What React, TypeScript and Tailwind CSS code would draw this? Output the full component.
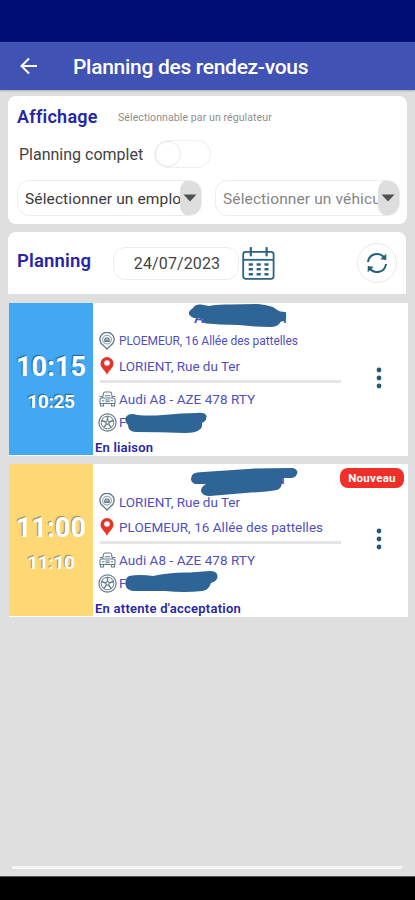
import React from "react";

const INK = "#2f6496";

function PinOutline() {
  return (
    <svg width="16" height="18" viewBox="0 0 16 18" fill="none" stroke="#5b7684" strokeWidth="1.3">
      <path d="M8 17 4.6 13.6A7.1 7.1 0 1 1 11.4 13.6Z" strokeLinejoin="round" />
      <circle cx="8" cy="7.6" r="4.4" strokeWidth="0.8" />
      <path d="M5.8 9.4V7.9Q5.800 5.900 8 5.900T10.200 7.900V9.400ZM5.800 8H10.200" strokeWidth="1.1" />
    </svg>
  );
}

function PinRed() {
  return (
    <svg width="14" height="18" viewBox="0 0 14 18">
      <path d="M7 18C5.800 14 .5 11.200 .5 6.600A6.500 6.500 0 0 1 13.500 6.600C13.500 11.200 8.200 14 7 18Z" fill="#e5352b" />
      <circle cx="7" cy="6" r="2.800" fill="#fff" />
    </svg>
  );
}

function CarIcon() {
  return (
    <svg width="17" height="16" viewBox="0 0 17 16" fill="none" stroke="#647d8a" strokeWidth="1.1">
      <path d="M3.500 7 4.600 2.200Q4.800 1 6 1H11Q12.200 1 12.400 2.200L13.500 7" />
      <path d="M1 8.500Q1 7 2.800 7H14.200Q16 7 16 8.500V12.500H1ZM1.500 12.500V15H4.500V12.500M12.500 12.500V15H15.500V12.500M.5 5.500H3.300M13.700 5.500H16.500" />
      <path d="M3 9.800H5.300M11.700 9.800H14M6.300 9H10.700M6.300 10.800H10.700M5.700 4.800H11.300" />
    </svg>
  );
}

function WheelIcon() {
  return (
    <svg width="19" height="19" viewBox="0 0 19 19" fill="none" stroke="#647d8a">
      <circle cx="9.500" cy="9.500" r="8.600" strokeWidth="1.200" />
      <circle cx="9.500" cy="9.500" r="6.300" strokeWidth="1" />
      <circle cx="9.500" cy="9.500" r="1.700" strokeWidth="1.100" />
      <path d="M9.500 7.800V3.200M11.100 9 15.500 7.500M10.500 10.900 13.200 14.600M8.500 10.900 5.800 14.600M7.900 9 3.500 7.500" strokeWidth="1.500" />
    </svg>
  );
}

function CalendarIcon() {
  return (
    <svg width="33" height="33" viewBox="0 0 33 33" fill="none" stroke="#2d6482" strokeWidth="1.800">
      <rect x="1.200" y="4.800" width="30.400" height="27" rx="2.500" />
      <path d="M1.200 12.800H31.600" />
      <path d="M8.800 1V8.500M24.600 1V8.500" strokeLinecap="round" strokeWidth="2.200" />
      <path d="M6.700 17.500H26.500M6.700 22.300H26.500M6.700 27.200H26.500" strokeWidth="2.600" strokeDasharray="4.200 3.700" />
    </svg>
  );
}

function RefreshIcon() {
  return (
    <svg width="22" height="22" viewBox="0 0 22 22" fill="none" stroke="#24607a" strokeWidth="2">
      <path d="M2 10A9 9 0 0 1 18.300 5.800M20 12A9 9 0 0 1 3.700 16.200" />
      <path d="M20.300 1.800V8L14.300 7.300ZM1.700 20.200V14L7.700 14.700Z" fill="#24607a" stroke="none" />
    </svg>
  );
}

function Select({ label, tone }: { label: string; tone: string }) {
  return (
    <div className="flex h-9 w-[185px] overflow-hidden rounded-xl border border-[#ededed]">
      <div className={`flex-1 overflow-hidden whitespace-nowrap pl-[7px] text-[15.5px] leading-[36px] tracking-[0.12px] ${tone}`}>
        {label}
      </div>
      <div className="-my-px -mr-px flex w-[22px] shrink-0 items-center justify-center rounded-[10px] bg-[#dedede] pr-[2px]">
        <svg width="14" height="8" viewBox="0 0 14 8">
          <path d="M.5.500H13.500L7 7.500Z" fill="#505050" />
        </svg>
      </div>
    </div>
  );
}

type Ride = {
  start: string;
  end: string;
  color: string;
  shadow: string;
  from: string;
  fromStyle: string;
  to: string;
  toStyle: string;
  status: string;
  statusStyle: string;
  isNew?: boolean;
  nameStyle: string;
  nameMask: string;
  driverMask: string;
};

const rides: Ride[] = [
  {
    start: "10:15",
    end: "10:25",
    color: "bg-[#42a8f3]",
    shadow: "[text-shadow:-1px_-1px_1px_#28658f]",
    from: "PLOEMEUR, 16 Allée des pattelles",
    fromStyle: "text-[12px] tracking-[-0.05px]",
    to: "LORIENT, Rue du Ter",
    toStyle: "text-[13.5px] tracking-[-0.02px]",
    status: "En liaison",
    statusStyle: "tracking-[0.2px]",
    nameStyle: "pr-[54px]",
    nameMask:
      "M103 5Q105 1 111 1.500L119 3Q126 1 140 1.500L168 1Q177 2 183 4Q187 7 190 8.500Q195 8 196 11V16Q194 19 191 18.500Q188 24 180 24L165 23.500Q150 21.500 130 21.500L117 20.500Q112 20 113 16L104 15Q98 13 99 9Q100 7 103 5Z",
    driverMask:
      "M38 112Q42 110 47 112Q60 113 73 112Q92 110 107 110Q115 109 116.500 113Q117 118 112 120Q113 125 109 127Q106 130 95 130Q70 129 46 129Q38 129 38 122Q34 118 36 114Z",
  },
  {
    start: "11:00",
    end: "11:10",
    color: "bg-[#fed875]",
    shadow: "[text-shadow:-1px_-1px_1px_#9b8a5b]",
    from: "LORIENT, Rue du Ter",
    fromStyle: "text-[13.5px] tracking-[-0.02px]",
    to: "PLOEMEUR, 16 Allée des pattelles",
    toStyle: "text-[13.5px] tracking-[0.03px]",
    status: "En attente d'acceptation",
    statusStyle: "tracking-[0.25px]",
    isNew: true,
    nameStyle: "pr-[56px]",
    nameMask:
      "M103 10Q106 8 113 8Q140 6 165 4.500L201 4Q206 3.500 207.500 8Q207 13.500 201 14L192 14Q193 24 187 26Q175 28 155 29L120 32Q112 32 111 27Q111 23 116 20L106 20Q101 19 101 15Q101 12 103 10Z",
    driverMask:
      "M39 112Q50 110 63 112Q80 108 100 108.500L120 107Q127 107 127.500 112Q128 117 121 119Q119 126 112 127Q95 129 75 127L45 127Q37 127 35.500 121Q35 114 39 112Z",
  },
];

function RideCard({ ride }: { ride: Ride }) {
  return (
    <article className="relative flex h-[153px] bg-white text-[#514fbf]">
      <div className={`flex h-[152px] w-[84px] shrink-0 flex-col items-center pt-[46px] font-bold text-white ${ride.color} ${ride.shadow}`}>
        <div className="text-[27px] leading-9 tracking-[0.1px]">{ride.start}</div>
        <div className="mt-[2px] text-[19px] leading-[30px] tracking-[-0.3px]">{ride.end}</div>
      </div>
      <div className="w-[248px] shrink-0 whitespace-nowrap">
        <div className={`flex h-[26px] items-start justify-between pl-[101px] pt-[6px] text-[15px] font-medium leading-[18px] ${ride.nameStyle}`}>
          <span>AI</span>
          <span>I</span>
        </div>
        <div className="flex h-6 items-center">
          <span className="flex w-[26px] justify-center pl-[2px]"><PinOutline /></span>
          <span className={ride.fromStyle}>{ride.from}</span>
        </div>
        <div className="flex h-[26px] items-center">
          <span className="flex w-[26px] justify-center pl-[2px]"><PinRed /></span>
          <span className={ride.toStyle}>{ride.to}</span>
        </div>
        <div className="ml-[7px] mt-px h-[3px] bg-[#e5e5e5]" />
        <div className="mt-[4px] flex h-6 items-center">
          <span className="flex w-[26px] justify-center pl-[2px]"><CarIcon /></span>
          <span className="text-[13.5px] tracking-[0.04px]">Audi A8 - AZE 478 RTY</span>
        </div>
        <div className="flex h-[22px] items-center">
          <span className="flex w-[26px] justify-center pl-[2px]"><WheelIcon /></span>
          <span className="text-[13.5px]">F</span>
        </div>
        <div className={`mt-[5px] pl-[2px] text-[13px] font-semibold leading-[19px] text-[#2626a5] ${ride.statusStyle}`}>
          {ride.status}
        </div>
      </div>
      <svg className="absolute left-[81px] top-0" width="230" height="140" viewBox="0 0 230 140">
        <path d={ride.nameMask} fill={INK} />
        <path d={ride.driverMask} fill={INK} />
      </svg>
      <div className="flex flex-1 flex-col items-center pl-[8px] pt-[64px]">
        <svg width="6" height="22" viewBox="0 0 6 22" fill="#245a75">
          <circle cx="3" cy="3" r="2.400" />
          <circle cx="3" cy="11" r="2.400" />
          <circle cx="3" cy="19" r="2.400" />
        </svg>
      </div>
      {ride.isNew && (
        <div className="absolute right-[4px] top-[4px] h-[20px] w-[64px] rounded-[8px] bg-[#ee3029] text-center text-[11.5px] font-bold leading-[20px] tracking-[0.3px] text-white">
          Nouveau
        </div>
      )}
    </article>
  );
}

export default function App() {
  return (
    <div className="flex h-[900px] w-[415px] flex-col overflow-hidden bg-[#dfdfdf] font-['Roboto',sans-serif]">
      <div className="h-[42px] shrink-0 bg-[#000d74]" />
      <header className="flex h-[48px] shrink-0 items-center bg-[#4052b4] pl-[20px] text-white shadow-[0_1px_2px_#aaa]">
        <svg width="18" height="18" viewBox="0 0 18 18" fill="none" stroke="white" strokeWidth="2">
          <path d="M17 9H2M9 1.500 1.500 9 9 16.500" />
        </svg>
        <h1 className="ml-[35px] pt-[3px] text-[21px] font-medium tracking-[-0.3px]">Planning des rendez-vous</h1>
      </header>

      <main className="flex flex-1 flex-col">
        <section className="ml-2 mt-[6px] h-[128px] w-[399px] rounded-lg bg-white pl-[9px]">
          <div className="flex h-[40px] items-center">
            <h2 className="w-[101px] text-[18px] font-semibold tracking-[0.25px] text-[#2525a8]">Affichage</h2>
            <span className="pt-[3px] text-[10.5px] tracking-[0.1px] text-[#8d8d8d]">Sélectionnable par un régulateur</span>
          </div>
          <div className="flex h-[36px] items-center">
            <span className="w-[137px] pl-[2px] pt-[2px] text-[16px] text-[#424242]">Planning complet</span>
            <div className="h-[28px] w-[57px] rounded-full border border-[#eee]">
              <div className="h-[26px] w-[26px] rounded-full border border-[#e8e8e8]" />
            </div>
          </div>
          <div className="mt-[8px] flex gap-[13px]">
            <Select label="Sélectionner un employé" tone="text-[#3a3a3a]" />
            <Select label="Sélectionner un véhicule" tone="text-[#858585]" />
          </div>
        </section>

        <section className="ml-2 mt-[8px] flex h-[62px] w-[398px] items-center rounded-t-lg bg-white pl-[9px]">
          <h2 className="w-[96px] pb-[3px] text-[18.5px] font-semibold tracking-[0.15px] text-[#2525a8]">Planning</h2>
          <div className="h-[33px] w-[126px] rounded-xl border border-[#ededed] pl-[2px] text-center text-[16px] leading-[31px] tracking-[0.12px] text-[#444]">
            24/07/2023
          </div>
          <div className="ml-[3px]"><CalendarIcon /></div>
          <div className="ml-[82px] flex h-[40px] w-[40px] items-center justify-center rounded-full border border-[#eaeaea]">
            <RefreshIcon />
          </div>
        </section>

        <div className="ml-[9px] mt-[9px] flex w-[399px] flex-col gap-[8px]">
          {rides.map((ride) => (
            <RideCard key={ride.start} ride={ride} />
          ))}
        </div>

        <div className="mb-[7px] ml-3 mt-auto h-[3px] w-[390px] bg-[#f5f5f5]" />
      </main>
      <div className="h-[24px] shrink-0 border-t border-[#555] bg-black" />
    </div>
  );
}
